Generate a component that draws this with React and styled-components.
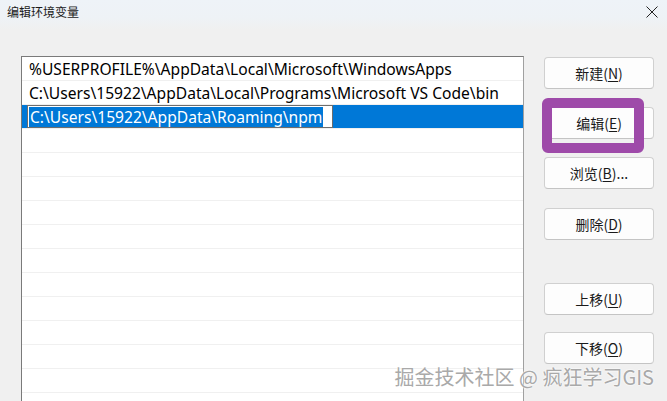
import React from "react";
import styled, { createGlobalStyle } from "styled-components";

const Global = createGlobalStyle`
  html, body { margin: 0; padding: 0; background: #f0f0f0; overflow: hidden; }
  * { box-sizing: border-box; }
`;

const Window = styled.div`
  position: relative;
  width: 667px;
  height: 401px;
  overflow: hidden;
  background: #f0f0f0;
  font-family: "Noto Sans", "Noto Sans CJK SC", sans-serif;
`;

const TitleBar = styled.div`
  height: 30px;
  display: flex;
  align-items: flex-start;
  justify-content: space-between;
  padding: 5px 9px 0 7px;
  background: linear-gradient(#eef3f8 0%, #eef2f6 60%, #f0f0f0 100%);
`;

const Title = styled.div`
  font-family: "Noto Sans CJK SC", sans-serif;
  font-size: 12px;
  line-height: 14px;
  color: #1a1a1a;
`;

const Close = styled.svg`
  width: 12px;
  height: 12px;
  margin-top: 1px;
`;

const Body = styled.div`
  display: flex;
  align-items: flex-start;
  padding: 26px 0 0 21px;
`;

const List = styled.div`
  width: 503px;
  height: 380px;
  background: #fff;
  border: 1px solid #7a7a7a;
  border-right-color: #a0a0a0;
  display: flex;
  flex-direction: column;
`;

const Row = styled.div`
  height: 24px;
  flex: none;
  display: flex;
  align-items: center;
  padding-left: 7px;
  border-bottom: 1px solid #f0f0f0;
  background: ${(p) => (p.$selected ? "#0078d7" : "transparent")};
  font-size: 15.6px;
  color: #000;
  white-space: nowrap;
`;

const EditBox = styled.div`
  margin-left: -2px;
  width: 306px;
  height: 23px;
  background: #fff;
  border: 1px solid #6d6d6d;
  display: flex;
  align-items: center;
  padding-left: 1px;
`;

const Sel = styled.span`
  background: #0078d7;
  color: #fff;
  line-height: 20px;
  padding: 0 1px;
`;

const Buttons = styled.div`
  margin-left: 20px;
  margin-top: 1px;
  width: 110px;
  display: flex;
  flex-direction: column;
`;

const Btn = styled.div`
  position: relative;
  height: 32px;
  margin-top: ${(p) => p.$gap || 0}px;
  background: #fdfdfd;
  border: 1px solid #d0d0d0;
  border-bottom-color: #c4c4c4;
  border-radius: 4px;
  display: flex;
  align-items: center;
  justify-content: center;
  font-family: "Noto Sans CJK SC", sans-serif;
  font-size: 14px;
  color: #1a1a1a;
  u { text-underline-offset: 2px; }
`;

const Highlight = styled.div`
  position: absolute;
  left: -3px;
  top: -10px;
  width: 102px;
  height: 55px;
  border: 10px solid #9e4aa9;
  border-radius: 6px;
  pointer-events: none;
`;

const Watermark = styled.div`
  position: absolute;
  right: 13px;
  bottom: 10px;
  font-family: "Noto Sans CJK SC", sans-serif;
  font-size: 20px;
  color: #a9a9a9;
  text-shadow: 0 0 2px #fff, 0 0 2px #fff;
  white-space: nowrap;
`;

const rows = [
  "%USERPROFILE%\\AppData\\Local\\Microsoft\\WindowsApps",
  "C:\\Users\\15922\\AppData\\Local\\Programs\\Microsoft VS Code\\bin",
];

const buttons = [
  { label: "新建", key: "N", gap: 0 },
  { label: "编辑", key: "E", gap: 18, hl: true },
  { label: "浏览", key: "B", gap: 18, tail: "..." },
  { label: "删除", key: "D", gap: 19 },
  { label: "上移", key: "U", gap: 43 },
  { label: "下移", key: "O", gap: 17 },
];

export default function App() {
  return (
    <Window>
      <Global />
      <TitleBar>
        <Title>编辑环境变量</Title>
        <Close viewBox="0 0 12 12">
          <path d="M0.5 0.5 L11.5 11.5 M11.5 0.5 L0.5 11.5" stroke="#222" strokeWidth="1" fill="none" />
        </Close>
      </TitleBar>
      <Body>
        <List>
          {rows.map((r) => (
            <Row key={r}>{r}</Row>
          ))}
          <Row $selected>
            <EditBox>
              <Sel>C:\Users\15922\AppData\Roaming\npm</Sel>
            </EditBox>
          </Row>
          {Array.from({ length: 12 }).map((_, i) => (
            <Row key={i} />
          ))}
        </List>
        <Buttons>
          {buttons.map((b) => (
            <Btn key={b.key} $gap={b.gap}>
              {b.label}(<u>{b.key}</u>){b.tail || ""}
              {b.hl && <Highlight />}
            </Btn>
          ))}
        </Buttons>
      </Body>
      <Watermark>掘金技术社区 @ 疯狂学习GIS</Watermark>
    </Window>
  );
}
